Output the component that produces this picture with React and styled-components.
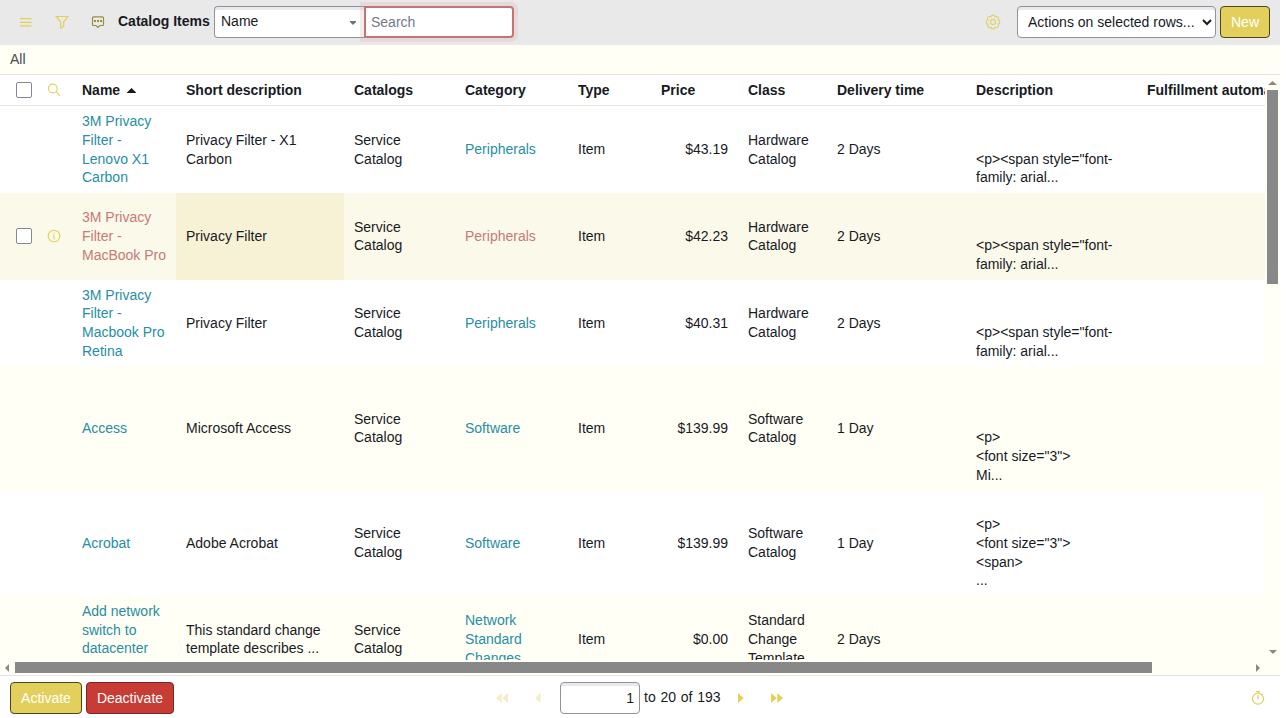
import React from "react";
import styled, { createGlobalStyle, css } from "styled-components";

const gold = "#e3cf5b";

const GlobalStyle = createGlobalStyle`
  * { box-sizing: border-box; }
  body {
    margin: 0;
    background: #fff;
    color: #181a1f;
    font: 14px/18.667px "Liberation Sans", Arial, sans-serif;
    overflow: hidden;
  }
`;

const Page = styled.div`
  width: 1280px;
  height: 718px;
  display: flex;
  flex-direction: column;
`;

const Toolbar = styled.header`
  height: 45px;
  flex: none;
  display: flex;
  align-items: flex-start;
  padding: 6px 10px 0 8px;
  background: #e9e9e9;
`;

const IconButton = styled.button`
  width: 36px;
  height: 32px;
  padding: 0;
  border: 0;
  background: none;
  display: flex;
  align-items: center;
  justify-content: center;
  color: ${(p) => p.$color || gold};
  opacity: ${(p) => (p.disabled ? 0.35 : 1)};
`;

const Title = styled.h1`
  width: 96px;
  margin: 0 0 0 2px;
  padding-top: 6px;
  font-size: 14px;
  line-height: 18px;
  white-space: nowrap;
`;

const field = css`
  height: 32px;
  border: 1px solid #8e939f;
  background: #fff;
  color: #181a1f;
  font: 14px "Liberation Sans", Arial, sans-serif;
  box-shadow: inset 0 3px 0 #e9e9e9;
`;

const FieldPicker = styled.div`
  ${field}
  width: 150px;
  padding: 0 8px 2px 6px;
  display: flex;
  align-items: center;
  justify-content: space-between;
  border-right: 0;
  border-radius: 4px 0 0 4px;
`;

const Caret = styled.svg`
  margin-top: 4px;
`;

const SearchInput = styled.input`
  ${field}
  width: 150px;
  padding: 0 5px;
  border: 2px solid #c47474;
  border-radius: 0 4px 4px 0;
  box-shadow: 0 0 0 4px rgba(220, 160, 160, 0.22);
  &::placeholder { color: #747987; opacity: 1; }
`;

const Spacer = styled.div`
  flex: 1;
`;

const ActionSelect = styled.select`
  ${field}
  width: 199px;
  margin: 0 4px 0 6px;
  padding: 0 0 0 6px;
  border-radius: 4px;
`;

const Button = styled.button`
  width: ${(p) => p.$width}px;
  height: 32px;
  padding: 0;
  border: 1px solid ${(p) => (p.$danger ? "#7b2622" : "#4b4520")};
  border-radius: 4px;
  background: ${(p) => (p.$danger ? "#c83c36" : gold)};
  color: #fff;
  font: 14px "Liberation Sans", Arial, sans-serif;
`;

const Breadcrumb = styled.nav`
  height: 30px;
  flex: none;
  padding: 5px 10px 0;
  background: #fffff5;
  border-bottom: 1px solid #e3e4e8;
  color: #464b56;
`;

const ListArea = styled.main`
  height: 601px;
  flex: none;
  display: grid;
  grid-template: 585px 16px / 1265px 15px;
  background: #fffff5;
  border-bottom: 1px solid #e3e4e8;
`;

const TableView = styled.div`
  overflow: hidden;
`;

const Row = styled.div`
  display: grid;
  grid-template-columns: 40px 32px 104px 168px 111px 113px 83px 87px 89px 139px 171px 200px;
  width: 1337px;
  background: ${(p) => (p.$hover ? "#fbf9e9" : p.$alt ? "#fffff5" : "#fff")};
`;

const HeadRow = styled(Row)`
  height: 31.400px;
  border-bottom: 1px solid #e3e4e8;
  font-weight: bold;
`;

const Cell = styled.div`
  display: flex;
  align-items: center;
  justify-content: ${(p) => (p.$right ? "flex-end" : "flex-start")};
  padding: 6px ${(p) => (p.$right ? 10 : 9)}px 6px 10px;
  white-space: pre-line;
  background: ${(p) => (p.$active ? "#f7f2d6" : "none")};
`;

const HeadCell = styled(Cell)`
  padding: 0 10px;
  gap: 7px;
  white-space: nowrap;
`;

const ControlCell = styled.div`
  display: flex;
  align-items: center;
  padding-left: ${(p) => (p.$check ? 16 : 7)}px;
`;

const GoldIcon = styled.span`
  display: flex;
  color: ${gold};
`;

const Link = styled.a`
  color: ${(p) => (p.$hover ? "#c67979" : "#278ea3")};
`;

const Checkbox = styled.input`
  appearance: none;
  width: 16px;
  height: 16px;
  margin: 0;
  border: 1px solid #858995;
  border-radius: 2px;
  background: #fff;
`;

const VerticalBar = styled.div`
  display: flex;
  flex-direction: column;
  align-items: center;
  padding: 6px 0 6px;
`;

const VerticalThumb = styled.div`
  width: 11px;
  height: 194px;
  margin: 5px 0 auto;
  background: #888;
`;

const HorizontalBar = styled.div`
  display: flex;
  align-items: center;
  padding: 0 5px 1px;
`;

const HorizontalThumb = styled.div`
  width: 1137px;
  height: 11px;
  margin: 0 auto 0 6px;
  background: #888;
`;

const Footer = styled.footer`
  height: 42px;
  display: grid;
  grid-template-columns: 474px auto 1fr;
  padding: 6px 4px 0 10px;
`;

const ButtonGroup = styled.div`
  display: flex;
  gap: 4px;
`;

const Pager = styled.div`
  display: flex;
`;

const PageInput = styled.input`
  ${field}
  width: 80px;
  margin: 0 4px;
  padding: 0 5px;
  border-radius: 4px;
  text-align: right;
`;

const PageText = styled.span`
  width: 79px;
  padding-top: 6px;
  word-spacing: 0.9px;
  white-space: nowrap;
`;

const FooterEnd = styled.div`
  display: flex;
  justify-content: flex-end;
`;

const Icon = ({ size = 16, stroke = 1.1, children }) => (
  <svg width={size} height={size} viewBox={`0 0 ${size} ${size}`} fill="none" stroke="currentColor" strokeWidth={stroke}>
    {children}
  </svg>
);

const InfoIcon = () => (
  <Icon size={14}>
    <circle cx="7" cy="7" r="5.800" />
    <path d="M7 3.500v1M7 5.500v5" />
  </Icon>
);

const gearPoints = Array.from({ length: 8 }, (_, k) => {
  const angle = ((22.5 + 45 * k) * Math.PI) / 180;
  return `${(8 + 5.7 * Math.cos(angle)).toFixed(2)} ${(8 + 5.7 * Math.sin(angle)).toFixed(2)}`;
});
const gearOutline = `M${gearPoints[7]}${gearPoints.map((p) => `A2.300 2.300 0 0 1 ${p}`).join("")}Z`;

const arrows = {
  up: [9, 4, "M0 4 4.500 0 9 4Z"],
  down: [8, 4, "M0 0h8L4 4Z"],
  left: [4, 8, "M4 0v8L0 4Z"],
  right: [4, 8, "M0 0v8l4-4Z"],
};

const Arrow = ({ dir }) => {
  const [w, h, d] = arrows[dir];
  return <svg width={w} height={h} fill="#888"><path d={d} /></svg>;
};

const PageArrow = ({ back, double }) => (
  <svg width={double ? 12 : 6} height="10" fill="currentColor">
    {back ? <path d="M5.700 0v10L0 5Z" /> : <path d="M0 0v10l5.700-5Z" />}
    {double && (back ? <path d="M12 0v10L6.300 5Z" /> : <path d="M6.300 0v10l5.700-5Z" />)}
  </svg>
);

const html = '\u200b\n\u200b\n<p><span style="font-family: arial...';
const items = [
  ["3M Privacy Filter - Lenovo X1 Carbon", "Privacy Filter - X1 Carbon", "Peripherals", "$43.19", "Hardware Catalog", "2 Days", html],
  ["3M Privacy Filter - MacBook Pro", "Privacy Filter", "Peripherals", "$42.23", "Hardware Catalog", "2 Days", html],
  ["3M Privacy Filter - Macbook Pro Retina", "Privacy Filter", "Peripherals", "$40.31", "Hardware Catalog", "2 Days", html],
  ["Access", "Microsoft Access", "Software", "$139.99", "Software Catalog", "1 Day", '\u200b\n\u200b\n\u200b\n<p>\n<font size="3">\nMi...'],
  ["Acrobat", "Adobe Acrobat", "Software", "$139.99", "Software Catalog", "1 Day", '\u200b\n<p>\n<font size="3">\n<span>\n...'],
  ["Add network switch to datacenter cabinet", "This standard change template describes ...", "Network Standard Changes", "$0.00", "Standard Change Template", "2 Days", ""],
];

const headings = ["Short description", "Catalogs", "Category", "Type", "Price", "Class", "Delivery time", "Description", "Fulfillment automation level"];

export default function App() {
  return (
    <>
      <GlobalStyle />
      <Page>
        <Toolbar>
          <IconButton aria-label="Menu">
            <Icon stroke={1.2}><path d="M2 4.700h11.500M2 8.300h11.500M2 11.800h11.500" /></Icon>
          </IconButton>
          <IconButton aria-label="Filter">
            <Icon stroke={1.2}><path d="M2.200 2.500h11.600L9.700 8v4.500L6.700 14.300V8L2.200 2.500Z" /></Icon>
          </IconButton>
          <IconButton aria-label="Comments" $color="#9a8d3e">
            <Icon stroke={1.2}>
              <path d="M3.500 2.900h9a1 1 0 0 1 1 1v6.600a1 1 0 0 1-1 1H10l-2 1.900-2-1.900H3.500a1 1 0 0 1-1-1V3.900a1 1 0 0 1 1-1Z" />
              <path d="M4 7h2M7 7h2M10 7h2" strokeWidth="2" />
            </Icon>
          </IconButton>
          <Title>Catalog Items</Title>
          <FieldPicker>
            Name
            <Caret width="6" height="4" fill="#6c717d"><path d="M0 0h6v1L3 4 0 1Z" /></Caret>
          </FieldPicker>
          <SearchInput placeholder="Search" />
          <Spacer />
          <IconButton aria-label="Settings">
            <Icon>
              <circle cx="8" cy="8" r="2.500" />
              <path d={gearOutline} />
            </Icon>
          </IconButton>
          <ActionSelect><option>Actions on selected rows...</option></ActionSelect>
          <Button $width={50}>New</Button>
        </Toolbar>
        <Breadcrumb>All</Breadcrumb>
        <ListArea>
          <TableView>
            <HeadRow>
              <ControlCell $check><Checkbox type="checkbox" /></ControlCell>
              <ControlCell>
                <GoldIcon><Icon size={14}><circle cx="5.800" cy="5.500" r="4.400" /><path d="m9 8.700 4 4" /></Icon></GoldIcon>
              </ControlCell>
              <HeadCell>Name<svg width="9" height="5" fill="#181a1f"><path d="M0 5V4.500L4.500 0 9 4.500V5Z" /></svg></HeadCell>
              {headings.map((name) => <HeadCell key={name}>{name}</HeadCell>)}
            </HeadRow>
            {items.map(([name, short, category, price, type, time, description], i) => {
              const hover = i === 1;
              return (
                <Row key={name} $alt={i % 2 === 1} $hover={hover}>
                  <ControlCell $check>{hover && <Checkbox type="checkbox" />}</ControlCell>
                  <ControlCell>{hover && <GoldIcon><InfoIcon /></GoldIcon>}</ControlCell>
                  <Cell><Link $hover={hover}>{name}</Link></Cell>
                  <Cell $active={hover}>{short}</Cell>
                  <Cell>Service Catalog</Cell>
                  <Cell><Link $hover={hover}>{category}</Link></Cell>
                  <Cell>Item</Cell>
                  <Cell $right>{price}</Cell>
                  <Cell>{type}</Cell>
                  <Cell>{time}</Cell>
                  <Cell>{description}</Cell>
                  <Cell />
                </Row>
              );
            })}
          </TableView>
          <VerticalBar>
            <Arrow dir="up" />
            <VerticalThumb />
            <Arrow dir="down" />
          </VerticalBar>
          <HorizontalBar>
            <Arrow dir="left" />
            <HorizontalThumb />
            <Arrow dir="right" />
          </HorizontalBar>
        </ListArea>
        <Footer>
          <ButtonGroup>
            <Button $width={72}>Activate</Button>
            <Button $width={88} $danger>Deactivate</Button>
          </ButtonGroup>
          <Pager>
            <IconButton disabled aria-label="First page"><PageArrow back double /></IconButton>
            <IconButton disabled aria-label="Previous page"><PageArrow back /></IconButton>
            <PageInput defaultValue="1" />
            <PageText>to 20 of 193</PageText>
            <IconButton aria-label="Next page"><PageArrow /></IconButton>
            <IconButton aria-label="Last page"><PageArrow double /></IconButton>
          </Pager>
          <FooterEnd>
            <IconButton aria-label="Response time">
              <Icon stroke={1.2}>
                <circle cx="8" cy="8.700" r="5.500" />
                <path d="M8 5.300v4.200M6 1.500h4M8 1.500v2M11.800 4l1 1" />
              </Icon>
            </IconButton>
          </FooterEnd>
        </Footer>
      </Page>
    </>
  );
}
